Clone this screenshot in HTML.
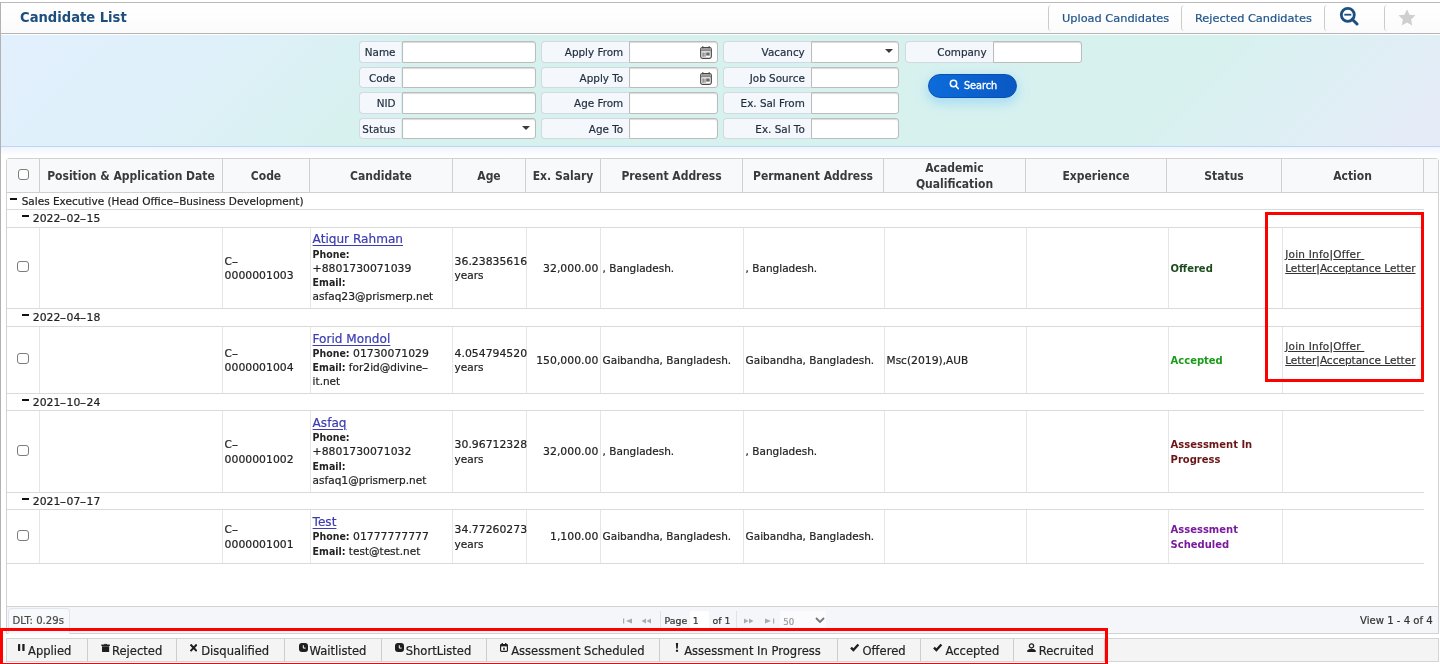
<!DOCTYPE html>
<html><head><meta charset="utf-8"><title>Candidate List</title>
<style>
*{box-sizing:border-box;margin:0;padding:0}
html,body{width:1440px;height:664px;overflow:hidden;background:#fff}
body{font-family:"DejaVu Sans","Liberation Sans",sans-serif;font-size:10.5px;color:#222;position:relative;-webkit-text-stroke:0.2px;will-change:transform}
b,.b{font-family:"DejaVu Sans Condensed","DejaVu Sans","Liberation Sans",sans-serif;font-weight:bold;-webkit-text-stroke:0}
.abs,.a{position:absolute}
.d{font-size:10.85px}
.hy{display:inline-block;width:6.2px;text-align:center;transform:scaleX(1.7)}
#frameL{position:absolute;left:0;top:2px;width:1px;height:662px;background:#b2b2b2}
#frameT{position:absolute;left:0;top:2px;width:1440px;height:1px;background:#b9b9b9}
#titlebar{position:absolute;left:1px;top:3px;width:1439px;height:30px;background:linear-gradient(#fff,#fbfbfb)}
#titleline{position:absolute;left:0;top:33px;width:1440px;height:1px;background:#b4b4b4}
#title{position:absolute;left:20px;top:7px;font-size:14.6px;color:#1c4e7e;line-height:20px;white-space:nowrap}
.tsep{position:absolute;top:5px;height:26px;width:5px;border-left:1px solid #cbcbcb;border-radius:3.5px 0 0 3.5px}
.tbtn{position:absolute;top:10px;font-size:11.35px;line-height:16px;color:#20548a;white-space:nowrap}
#filter{position:absolute;left:1px;top:35px;width:1439px;height:112px;background:linear-gradient(135deg,#e1f0fc 0%,#e0f0fb 13%,#d7f1ef 28%,#d7f1ef 80%,#e1eef6 92%,#e8e9f8 103%);border-bottom:1px solid #bad7f7}
#filterfade{position:absolute;left:1px;top:147px;width:1439px;height:9px;background:linear-gradient(#f1f4fd,#fff)}
.flab{position:absolute;height:21.4px;border:1px solid #d3d9e2;border-right:none;border-radius:4px 0 0 4px;background:#f4f7fc;font-size:10.4px;line-height:20.5px;text-align:right;padding-right:6px;color:#1f2d3d;white-space:nowrap}
.finp{position:absolute;height:21.4px;border:1px solid #bcbcbc;border-radius:0 3px 3px 0;background:#fff;box-shadow:inset 0 1px 1px rgba(0,0,0,.15)}
.caret{position:absolute;width:0;height:0;border-left:4.6px solid transparent;border-right:4.6px solid transparent;border-top:4.4px solid #3a3a3a}
#search{position:absolute;left:927.5px;top:73.6px;width:89.2px;height:24.5px;border-radius:12.5px;background:linear-gradient(90deg,#0c6cda,#0a58c4);border:1px solid #0a4fb2;box-shadow:0 4px 11px 1px rgba(130,205,250,.6);color:#fff;font-size:9.7px;line-height:24px;white-space:nowrap;-webkit-text-stroke:0.35px}
#grid{position:absolute;left:6px;top:158px;width:1433px;height:476px;border:1px solid #d2d2d2;border-radius:3px 3px 0 0;background:#fff}
#ghead{position:absolute;left:7px;top:159px;width:1431px;height:34px;background:#f8f9fb;border-bottom:1px solid #d0d0d0}
.hl{position:absolute;top:159px;height:33px;width:1px;background:#d0d0d0}
.ht{position:absolute;top:160.3px;height:33px;font-size:12px;color:#3a3a3a;text-align:center;display:flex;align-items:center;justify-content:center;line-height:15.5px}
.hline{position:absolute;left:7px;width:1417px;height:1px;background:#dadada}
.gt{position:absolute;font-size:10.5px;line-height:14px;white-space:nowrap;color:#222}
.minus{position:absolute;height:2px;width:7px;background:#111}
.vl{position:absolute;width:1px;background:#e6e6e6}
.c{position:absolute;display:flex;align-items:center;color:#222}
.c>div{width:100%}
.ln{height:14.25px;line-height:14.25px;white-space:nowrap}
.ln *{line-height:1px}
.cb{position:absolute;width:11.4px;height:11.4px;border:1.2px solid #7c7c7c;border-radius:3px;background:#fff}
a.n{color:#3b3bb3;text-decoration:underline;text-decoration-thickness:1.4px;text-underline-offset:1.6px;font-size:12.1px}
a.act{color:#333;text-decoration:underline}
#pager{position:absolute;left:7px;top:606px;width:1431px;height:28px;background:#f5f6fa;border-top:1px solid #d2d2d2;border-bottom:1px solid #d2d2d2}
.pt{position:absolute;font-size:10.1px;line-height:14px;color:#333;white-space:nowrap}
#tbar{position:absolute;left:6px;top:638px;width:1433px;height:24px;background:#f4f4f4;border:1px solid #d4d4d4}
.ts{position:absolute;top:639px;height:22px;width:1px;background:#cdcdcd}
.tt{position:absolute;top:640.5px;font-size:11.55px;line-height:20px;color:#222;white-space:nowrap}
.red{position:absolute;border:3px solid #f00}
</style></head><body>
<div id="frameT"></div><div id="frameL"></div><div id="titlebar"></div><div id="titleline"></div>
<div id="title" class="b">Candidate List</div>
<div class="tsep" style="left:1048px"></div>
<div class="tsep" style="left:1181px"></div>
<div class="tsep" style="left:1324px"></div>
<div class="tsep" style="left:1384px"></div>
<div class="tbtn" style="left:1062px">Upload Candidates</div>
<div class="tbtn" style="left:1195px">Rejected Candidates</div>
<svg class="a" style="left:1339px;top:5.8px" width="21" height="20" viewBox="0 0 21 20"><circle cx="8.8" cy="8.8" r="6.5" fill="none" stroke="#1c4e7e" stroke-width="2.8"/><line x1="5.3" y1="8.7" x2="12.3" y2="8.7" stroke="#1c4e7e" stroke-width="1.8"/><line x1="13.2" y1="13.2" x2="18" y2="18" stroke="#1c4e7e" stroke-width="3" stroke-linecap="round"/></svg>
<svg class="a" style="left:1396.7px;top:8.4px" width="20" height="19" viewBox="0 0 24 24"><path fill="#cfcfcf" d="M12 1.5l3.2 6.9 7.5.9-5.5 5.2 1.4 7.5L12 18.3 5.4 22l1.4-7.5L1.3 9.3l7.5-.9z"/></svg>
<div id="filter"></div><div id="filterfade"></div>
<div class="flab" style="left:359.4px;top:41.2px;width:42.1px">Name</div><div class="finp" style="left:401.5px;top:41.2px;width:134.7px"></div>
<div class="flab" style="left:359.4px;top:66.8px;width:42.1px">Code</div><div class="finp" style="left:401.5px;top:66.8px;width:134.7px"></div>
<div class="flab" style="left:359.4px;top:92.3px;width:42.1px">NID</div><div class="finp" style="left:401.5px;top:92.3px;width:134.7px"></div>
<div class="flab" style="left:359.4px;top:117.7px;width:42.1px">Status</div><div class="finp" style="left:401.5px;top:117.7px;width:134.7px"></div>
<div class="flab" style="left:541.4px;top:41.2px;width:87.8px">Apply From</div><div class="finp" style="left:629.2px;top:41.2px;width:88.9px"></div>
<div class="flab" style="left:541.4px;top:66.8px;width:87.8px">Apply To</div><div class="finp" style="left:629.2px;top:66.8px;width:88.9px"></div>
<div class="flab" style="left:541.4px;top:92.3px;width:87.8px">Age From</div><div class="finp" style="left:629.2px;top:92.3px;width:88.9px"></div>
<div class="flab" style="left:541.4px;top:117.7px;width:87.8px">Age To</div><div class="finp" style="left:629.2px;top:117.7px;width:88.9px"></div>
<div class="flab" style="left:723.4px;top:41.2px;width:87.4px">Vacancy</div><div class="finp" style="left:810.8px;top:41.2px;width:88.7px"></div>
<div class="flab" style="left:723.4px;top:66.8px;width:87.4px">Job Source</div><div class="finp" style="left:810.8px;top:66.8px;width:88.7px"></div>
<div class="flab" style="left:723.4px;top:92.3px;width:87.4px">Ex. Sal From</div><div class="finp" style="left:810.8px;top:92.3px;width:88.7px"></div>
<div class="flab" style="left:723.4px;top:117.7px;width:87.4px">Ex. Sal To</div><div class="finp" style="left:810.8px;top:117.7px;width:88.7px"></div>
<div class="flab" style="left:904.5px;top:41.2px;width:88.1px">Company</div><div class="finp" style="left:992.6px;top:41.2px;width:89.2px"></div>
<div class="caret" style="left:522px;top:126px"></div>
<div class="caret" style="left:885px;top:49px"></div>
<svg class="a" style="left:700.4px;top:46px" width="12" height="13" viewBox="0 0 12 13"><rect x="0.7" y="1.5" width="10.6" height="10.8" rx="1.8" fill="#fff" stroke="#484848" stroke-width="1.2"/><rect x="1.3" y="2.1" width="9.4" height="2.3" fill="#9a9a9a"/><rect x="2.2" y="0.2" width="1.2" height="2" fill="#484848"/><rect x="8.6" y="0.2" width="1.2" height="2" fill="#484848"/><rect x="1.3" y="4.4" width="9.4" height=".8" fill="#555"/><rect x="2.5" y="6.4" width="1.1" height="4.4" fill="#555"/><rect x="4.5" y="6.4" width="1" height="4.4" fill="#666"/><rect x="6.2" y="6.4" width="3.5" height="3.2" fill="#6a6a6a"/></svg>
<svg class="a" style="left:700.4px;top:71.6px" width="12" height="13" viewBox="0 0 12 13"><rect x="0.7" y="1.5" width="10.6" height="10.8" rx="1.8" fill="#fff" stroke="#484848" stroke-width="1.2"/><rect x="1.3" y="2.1" width="9.4" height="2.3" fill="#9a9a9a"/><rect x="2.2" y="0.2" width="1.2" height="2" fill="#484848"/><rect x="8.6" y="0.2" width="1.2" height="2" fill="#484848"/><rect x="1.3" y="4.4" width="9.4" height=".8" fill="#555"/><rect x="2.5" y="6.4" width="1.1" height="4.4" fill="#555"/><rect x="4.5" y="6.4" width="1" height="4.4" fill="#666"/><rect x="6.2" y="6.4" width="3.5" height="3.2" fill="#6a6a6a"/></svg>
<div id="search"><svg class="a" style="left:20.4px;top:4.6px" width="11" height="12" viewBox="0 0 11 12"><circle cx="4.5" cy="4.5" r="3.2" fill="none" stroke="#fff" stroke-width="1.5"/><line x1="6.9" y1="7" x2="9.2" y2="9.5" stroke="#fff" stroke-width="1.7" stroke-linecap="round"/></svg><span class="a" style="left:35.4px;top:-0.9px">Search</span></div>
<div id="grid"></div><div id="ghead"></div>
<div class="hl" style="left:39px"></div>
<div class="hl" style="left:222px"></div>
<div class="ht b" style="left:40px;width:182px">Position &amp; Application Date</div>
<div class="hl" style="left:309px"></div>
<div class="ht b" style="left:223px;width:86px">Code</div>
<div class="hl" style="left:452px"></div>
<div class="ht b" style="left:310px;width:142px">Candidate</div>
<div class="hl" style="left:525px"></div>
<div class="ht b" style="left:453px;width:72px">Age</div>
<div class="hl" style="left:600px"></div>
<div class="ht b" style="left:526px;width:74px">Ex. Salary</div>
<div class="hl" style="left:742px"></div>
<div class="ht b" style="left:601px;width:141px">Present Address</div>
<div class="hl" style="left:883px"></div>
<div class="ht b" style="left:743px;width:140px">Permanent Address</div>
<div class="hl" style="left:1025px"></div>
<div class="ht b" style="left:884px;width:141px">Academic<br>Qualification</div>
<div class="hl" style="left:1166px"></div>
<div class="ht b" style="left:1026px;width:140px">Experience</div>
<div class="hl" style="left:1281px"></div>
<div class="ht b" style="left:1167px;width:114px">Status</div>
<div class="hl" style="left:1423px"></div>
<div class="ht b" style="left:1282px;width:141px">Action</div>
<div class="cb" style="left:18px;top:169px"></div>
<div class="minus" style="left:10.3px;top:197.5px"></div><span class="gt" style="left:21.7px;top:193.6px">Sales Executive (Head Office<span class="hy">-</span>Business Development)</span>
<div class="hline" style="top:209px"></div>
<div class="minus" style="left:22px;top:214.5px"></div><span class="gt" style="left:32.8px;top:210.6px"><span class="d">2022</span><span class="hy">-</span><span class="d">02</span><span class="hy">-</span><span class="d">15</span></span>
<div class="hline" style="top:227px"></div>
<div class="hline" style="top:308px"></div>
<div class="vl" style="left:39px;top:228px;height:80px"></div>
<div class="vl" style="left:222px;top:228px;height:80px"></div>
<div class="vl" style="left:310px;top:228px;height:80px"></div>
<div class="vl" style="left:452px;top:228px;height:80px"></div>
<div class="vl" style="left:526px;top:228px;height:80px"></div>
<div class="vl" style="left:600px;top:228px;height:80px"></div>
<div class="vl" style="left:743px;top:228px;height:80px"></div>
<div class="vl" style="left:884px;top:228px;height:80px"></div>
<div class="vl" style="left:1026px;top:228px;height:80px"></div>
<div class="vl" style="left:1168px;top:228px;height:80px"></div>
<div class="vl" style="left:1282px;top:228px;height:80px"></div>
<div class="c" style="left:223px;top:228px;width:87px;height:80px;padding:0 0 0 1.6px"><div><div class="ln">C<span class="hy">-</span></div><div class="ln"><span class="d">0000001003</span></div></div></div>
<div class="c" style="left:311px;top:228px;width:141px;height:80px;padding:0 0 0 1.6px"><div><div class="ln"><a class="n">Atiqur Rahman</a></div><div class="ln"><b>Phone:</b></div><div class="ln"><span class="d">+8801730071039</span></div><div class="ln"><b>Email:</b></div><div class="ln">asfaq<span class="d">23</span>@prismerp.net</div></div></div>
<div class="c" style="left:453px;top:228px;width:73px;height:80px;padding:0 0 0 1.6px"><div><div class="ln"><span class="d">36.23835616</span></div><div class="ln">years</div></div></div>
<div class="c" style="left:527px;top:228px;width:73px;height:80px;text-align:right;padding:0 1.7px 0 0"><div><div class="ln"><span class="d">32,000.00</span></div></div></div>
<div class="c" style="left:601px;top:228px;width:142px;height:80px;padding:0 0 0 1.6px"><div><div class="ln">, Bangladesh.</div></div></div>
<div class="c" style="left:744px;top:228px;width:140px;height:80px;padding:0 0 0 1.6px"><div><div class="ln">, Bangladesh.</div></div></div>
<div class="c" style="left:1169px;top:228px;width:113px;height:80px;padding:0 0 0 1.6px"><div><div class="ln"><b style="color:#1d4a1d;font-size:11.1px">Offered</b></div></div></div>
<div class="c" style="left:1283px;top:228px;width:141px;height:80px;padding:0 0 0 1.6px"><div><div class="ln"><span style="letter-spacing:.22px;padding-left:.6px"><a class="act">Join Info</a>|<a class="act">Offer&nbsp;</a></span></div><div class="ln"><span style="padding-left:.6px"><a class="act">Letter</a>|<a class="act">Acceptance Letter</a></span></div><div class="ln">&nbsp;</div></div></div>
<div class="cb" style="left:17.2px;top:261.1px"></div>
<div class="minus" style="left:22px;top:313.5px"></div><span class="gt" style="left:32.8px;top:309.6px"><span class="d">2022</span><span class="hy">-</span><span class="d">04</span><span class="hy">-</span><span class="d">18</span></span>
<div class="hline" style="top:326px"></div>
<div class="hline" style="top:393px"></div>
<div class="vl" style="left:39px;top:327px;height:66px"></div>
<div class="vl" style="left:222px;top:327px;height:66px"></div>
<div class="vl" style="left:310px;top:327px;height:66px"></div>
<div class="vl" style="left:452px;top:327px;height:66px"></div>
<div class="vl" style="left:526px;top:327px;height:66px"></div>
<div class="vl" style="left:600px;top:327px;height:66px"></div>
<div class="vl" style="left:743px;top:327px;height:66px"></div>
<div class="vl" style="left:884px;top:327px;height:66px"></div>
<div class="vl" style="left:1026px;top:327px;height:66px"></div>
<div class="vl" style="left:1168px;top:327px;height:66px"></div>
<div class="vl" style="left:1282px;top:327px;height:66px"></div>
<div class="c" style="left:223px;top:327px;width:87px;height:66px;padding:0 0 0 1.6px"><div><div class="ln">C<span class="hy">-</span></div><div class="ln"><span class="d">0000001004</span></div></div></div>
<div class="c" style="left:311px;top:327px;width:141px;height:66px;padding:0 0 0 1.6px"><div><div class="ln"><a class="n">Forid Mondol</a></div><div class="ln"><b>Phone:</b> <span class="d">01730071029</span></div><div class="ln"><b>Email:</b> for<span class="d">2</span>id@divine<span class="hy">-</span></div><div class="ln">it.net</div></div></div>
<div class="c" style="left:453px;top:327px;width:73px;height:66px;padding:0 0 0 1.6px"><div><div class="ln"><span class="d">4.054794520</span></div><div class="ln">years</div></div></div>
<div class="c" style="left:527px;top:327px;width:73px;height:66px;text-align:right;padding:0 1.7px 0 0"><div><div class="ln"><span class="d">150,000.00</span></div></div></div>
<div class="c" style="left:601px;top:327px;width:142px;height:66px;padding:0 0 0 1.6px"><div><div class="ln">Gaibandha, Bangladesh.</div></div></div>
<div class="c" style="left:744px;top:327px;width:140px;height:66px;padding:0 0 0 1.6px"><div><div class="ln">Gaibandha, Bangladesh.</div></div></div>
<div class="c" style="left:885px;top:327px;width:141px;height:66px;padding:0 0 0 1.6px"><div><div class="ln">Msc(<span class="d">2019</span>),AUB</div></div></div>
<div class="c" style="left:1169px;top:327px;width:113px;height:66px;padding:0 0 0 1.6px"><div><div class="ln"><b style="color:#1a9a1a;font-size:11.1px">Accepted</b></div></div></div>
<div class="c" style="left:1283px;top:327px;width:141px;height:66px;padding:0 0 0 1.6px"><div><div class="ln"><span style="letter-spacing:.22px;padding-left:.6px"><a class="act">Join Info</a>|<a class="act">Offer&nbsp;</a></span></div><div class="ln"><span style="padding-left:.6px"><a class="act">Letter</a>|<a class="act">Acceptance Letter</a></span></div><div class="ln">&nbsp;</div></div></div>
<div class="cb" style="left:17.2px;top:353.1px"></div>
<div class="minus" style="left:22px;top:398.5px"></div><span class="gt" style="left:32.8px;top:394.6px"><span class="d">2021</span><span class="hy">-</span><span class="d">10</span><span class="hy">-</span><span class="d">24</span></span>
<div class="hline" style="top:410px"></div>
<div class="hline" style="top:492px"></div>
<div class="vl" style="left:39px;top:411px;height:81px"></div>
<div class="vl" style="left:222px;top:411px;height:81px"></div>
<div class="vl" style="left:310px;top:411px;height:81px"></div>
<div class="vl" style="left:452px;top:411px;height:81px"></div>
<div class="vl" style="left:526px;top:411px;height:81px"></div>
<div class="vl" style="left:600px;top:411px;height:81px"></div>
<div class="vl" style="left:743px;top:411px;height:81px"></div>
<div class="vl" style="left:884px;top:411px;height:81px"></div>
<div class="vl" style="left:1026px;top:411px;height:81px"></div>
<div class="vl" style="left:1168px;top:411px;height:81px"></div>
<div class="vl" style="left:1282px;top:411px;height:81px"></div>
<div class="c" style="left:223px;top:411px;width:87px;height:81px;padding:0 0 0 1.6px"><div><div class="ln">C<span class="hy">-</span></div><div class="ln"><span class="d">0000001002</span></div></div></div>
<div class="c" style="left:311px;top:411px;width:141px;height:81px;padding:0 0 0 1.6px"><div><div class="ln"><a class="n">Asfaq</a></div><div class="ln"><b>Phone:</b></div><div class="ln"><span class="d">+8801730071032</span></div><div class="ln"><b>Email:</b></div><div class="ln">asfaq<span class="d">1</span>@prismerp.net</div></div></div>
<div class="c" style="left:453px;top:411px;width:73px;height:81px;padding:0 0 0 1.6px"><div><div class="ln"><span class="d">30.96712328</span></div><div class="ln">years</div></div></div>
<div class="c" style="left:527px;top:411px;width:73px;height:81px;text-align:right;padding:0 1.7px 0 0"><div><div class="ln"><span class="d">32,000.00</span></div></div></div>
<div class="c" style="left:601px;top:411px;width:142px;height:81px;padding:0 0 0 1.6px"><div><div class="ln">, Bangladesh.</div></div></div>
<div class="c" style="left:744px;top:411px;width:140px;height:81px;padding:0 0 0 1.6px"><div><div class="ln">, Bangladesh.</div></div></div>
<div class="c" style="left:1169px;top:411px;width:113px;height:81px;padding:0 0 0 1.6px"><div><div class="ln"><b style="color:#6b1515;font-size:11.1px">Assessment In</b></div><div class="ln"><b style="color:#6b1515;font-size:11.1px">Progress</b></div></div></div>
<div class="cb" style="left:17.2px;top:444.6px"></div>
<div class="minus" style="left:22px;top:497.5px"></div><span class="gt" style="left:32.8px;top:493.6px"><span class="d">2021</span><span class="hy">-</span><span class="d">07</span><span class="hy">-</span><span class="d">17</span></span>
<div class="hline" style="top:509px"></div>
<div class="hline" style="top:563px"></div>
<div class="vl" style="left:39px;top:510px;height:53px"></div>
<div class="vl" style="left:222px;top:510px;height:53px"></div>
<div class="vl" style="left:310px;top:510px;height:53px"></div>
<div class="vl" style="left:452px;top:510px;height:53px"></div>
<div class="vl" style="left:526px;top:510px;height:53px"></div>
<div class="vl" style="left:600px;top:510px;height:53px"></div>
<div class="vl" style="left:743px;top:510px;height:53px"></div>
<div class="vl" style="left:884px;top:510px;height:53px"></div>
<div class="vl" style="left:1026px;top:510px;height:53px"></div>
<div class="vl" style="left:1168px;top:510px;height:53px"></div>
<div class="vl" style="left:1282px;top:510px;height:53px"></div>
<div class="c" style="left:223px;top:510px;width:87px;height:53px;padding:0 0 0 1.6px"><div><div class="ln">C<span class="hy">-</span></div><div class="ln"><span class="d">0000001001</span></div></div></div>
<div class="c" style="left:311px;top:510px;width:141px;height:53px;padding:0 0 0 1.6px"><div><div class="ln"><a class="n">Test</a></div><div class="ln"><b>Phone:</b> <span class="d">01777777777</span></div><div class="ln"><b>Email:</b> test@test.net</div></div></div>
<div class="c" style="left:453px;top:510px;width:73px;height:53px;padding:0 0 0 1.6px"><div><div class="ln"><span class="d">34.77260273</span></div><div class="ln">years</div></div></div>
<div class="c" style="left:527px;top:510px;width:73px;height:53px;text-align:right;padding:0 1.7px 0 0"><div><div class="ln"><span class="d">1,100.00</span></div></div></div>
<div class="c" style="left:601px;top:510px;width:142px;height:53px;padding:0 0 0 1.6px"><div><div class="ln">Gaibandha, Bangladesh.</div></div></div>
<div class="c" style="left:744px;top:510px;width:140px;height:53px;padding:0 0 0 1.6px"><div><div class="ln">Gaibandha, Bangladesh.</div></div></div>
<div class="c" style="left:1169px;top:510px;width:113px;height:53px;padding:0 0 0 1.6px"><div><div class="ln"><b style="color:#7a1a9c;font-size:11.1px">Assessment</b></div><div class="ln"><b style="color:#7a1a9c;font-size:11.1px">Scheduled</b></div></div></div>
<div class="cb" style="left:17.2px;top:529.6px"></div>
<div id="pager"></div>
<div class="a" style="left:8px;top:607.5px;width:61.5px;height:26px;background:#f8f9fb;border:1px solid #e0e5ef;border-bottom:none;border-radius:4px 4px 0 0"></div>
<span class="pt" style="left:12.5px;top:614.3px;color:#484848">DLT: 0.29s</span>
<span class="pt" style="left:664.5px;top:613.5px;font-size:9.4px">Page</span>
<div class="a" style="left:690px;top:611px;width:19px;height:18px;background:#fff"></div><span class="pt" style="left:692.8px;top:613.5px;font-size:9.4px">1</span>
<span class="pt" style="left:712.5px;top:613.5px;font-size:9.4px">of 1</span>
<div class="a" style="left:660px;top:611px;width:1px;height:18px;background:#e2e2e6"></div><div class="a" style="left:736px;top:611px;width:1px;height:18px;background:#e2e2e6"></div>
<div class="a" style="left:780px;top:611px;width:46px;height:18px;background:#fbfbfd"></div><span class="pt" style="left:783.2px;top:614.5px;color:#999;font-size:8.6px">50</span>
<svg class="a" style="left:814.5px;top:617px" width="10" height="7" viewBox="0 0 10 7"><path d="M1 1l4 4 4-4" fill="none" stroke="#777" stroke-width="1.8"/></svg>
<svg class="a" style="left:623px;top:618px" width="10" height="6" viewBox="0 0 10 6"><rect x="0" y="0.5" width="1.2" height="5" fill="#aaa"/><path d="M9 0.5v5L3 3z" fill="#aaa"/></svg>
<svg class="a" style="left:641px;top:618px" width="10" height="6" viewBox="0 0 10 6"><path d="M5 0.5v5L0.5 3z" fill="#aaa"/><path d="M10 0.5v5L5.5 3z" fill="#aaa"/></svg>
<svg class="a" style="left:744px;top:618px" width="10" height="6" viewBox="0 0 10 6"><path d="M0 0.5v5L4.5 3z" fill="#aaa"/><path d="M5 0.5v5L9.5 3z" fill="#aaa"/></svg>
<svg class="a" style="left:765px;top:618px" width="10" height="6" viewBox="0 0 10 6"><rect x="8" y="0.5" width="1.2" height="5" fill="#aaa"/><path d="M0 0.5v5L6 3z" fill="#aaa"/></svg>
<span class="pt" style="right:7.3px;top:613.5px">View 1 - 4 of 4</span>
<div id="tbar"></div>
<div class="ts" style="left:87px"></div>
<div class="ts" style="left:176px"></div>
<div class="ts" style="left:284px"></div>
<div class="ts" style="left:381px"></div>
<div class="ts" style="left:486px"></div>
<div class="ts" style="left:659px"></div>
<div class="ts" style="left:837px"></div>
<div class="ts" style="left:920px"></div>
<div class="ts" style="left:1013px"></div>
<div class="ts" style="left:1104px"></div>
<span class="tt" style="left:28px">Applied</span>
<span class="tt" style="left:112px">Rejected</span>
<span class="tt" style="left:201.2px">Disqualified</span>
<span class="tt" style="left:309.5px">Waitlisted</span>
<span class="tt" style="left:405.7px">ShortListed</span>
<span class="tt" style="left:511.2px">Assessment Scheduled</span>
<span class="tt" style="left:684.2px">Assessment In Progress</span>
<span class="tt" style="left:862.5px">Offered</span>
<span class="tt" style="left:945.5px">Accepted</span>
<span class="tt" style="left:1038.7px">Recruited</span>
<svg class="a" style="left:18.3px;top:643.9px" width="6.6" height="7" viewBox="0 0 6.6 7"><rect x="0" y="0" width="2.2" height="7" rx=".4" fill="#1e1e1e"/><rect x="4.3" y="0" width="2.3" height="7" rx=".4" fill="#1e1e1e"/></svg>
<svg class="a" style="left:100.6px;top:642.6px" width="9.2" height="9.6" viewBox="0 0 9.2 9.6"><path d="M3.2 0.9h2.8v.9H3.2z" fill="#1e1e1e"/><rect x="0.2" y="1.4" width="8.8" height="1.5" rx=".6" fill="#1e1e1e"/><path d="M1 3.3h7.2v4.6a1.6 1.6 0 0 1-1.6 1.6H2.6A1.6 1.6 0 0 1 1 7.9z" fill="#1e1e1e"/></svg>
<svg class="a" style="left:190.2px;top:644.2px" width="7.2" height="7.6" viewBox="0 0 7.2 7.6"><path d="M1.2 1.3L6 6.4M6 1.3L1.2 6.4" stroke="#1e1e1e" stroke-width="2.1" stroke-linecap="square" fill="none"/></svg>
<svg class="a" style="left:298.6px;top:643px" width="9" height="9" viewBox="0 0 9 9"><rect x="0" y="0" width="9" height="9" rx="3" fill="#1e1e1e"/><path d="M4.3 2.2v2.9h2.3" stroke="#fff" stroke-width="1" fill="none"/></svg>
<svg class="a" style="left:394.8px;top:643px" width="9" height="9" viewBox="0 0 9 9"><rect x="0" y="0" width="9" height="9" rx="3" fill="#1e1e1e"/><path d="M4.3 2.2v2.9h2.3" stroke="#fff" stroke-width="1" fill="none"/></svg>
<svg class="a" style="left:499.6px;top:643px" width="8" height="9" viewBox="0 0 8 9"><rect x="0.6" y="1.6" width="6.8" height="6.8" rx=".8" fill="#fff" stroke="#1e1e1e" stroke-width="1.2"/><rect x="0.6" y="1.4" width="6.8" height="2" fill="#1e1e1e"/><rect x="1.6" y="0" width="1.3" height="2" fill="#1e1e1e"/><rect x="5.1" y="0" width="1.3" height="2" fill="#1e1e1e"/><rect x="3.2" y="4.6" width="1.6" height="2.2" fill="#1e1e1e"/></svg>
<svg class="a" style="left:675.4px;top:643px" width="4" height="9" viewBox="0 0 4 9"><path d="M0.9 0h2.2l-.3 5.6H1.2z" fill="#1e1e1e"/><rect x="0.9" y="6.7" width="2.2" height="2.1" rx=".4" fill="#1e1e1e"/></svg>
<svg class="a" style="left:850.2px;top:643.3px" width="9.6" height="8.8" viewBox="0 0 9.6 8.8"><path d="M1 4.6l2.4 2.5L8.4 1.4" stroke="#1e1e1e" stroke-width="2.3" fill="none"/></svg>
<svg class="a" style="left:933.1px;top:643.3px" width="9.6" height="8.8" viewBox="0 0 9.6 8.8"><path d="M1 4.6l2.4 2.5L8.4 1.4" stroke="#1e1e1e" stroke-width="2.3" fill="none"/></svg>
<svg class="a" style="left:1026.6px;top:642.6px" width="9" height="9.4" viewBox="0 0 9 9.4"><circle cx="4.5" cy="2.9" r="2.1" fill="#fff" stroke="#1e1e1e" stroke-width="1.3"/><path d="M0.2 9.2v-1.2c0-1.2 1.4-1.9 2.6-2.1h3.4c1.2.2 2.6.9 2.6 2.1v1.2z" fill="#1e1e1e"/></svg>
<div class="red" style="left:1265.3px;top:212px;width:158.8px;height:170px"></div>
<div class="red" style="left:0px;top:628px;width:1108px;height:38px"></div>
</body></html>
